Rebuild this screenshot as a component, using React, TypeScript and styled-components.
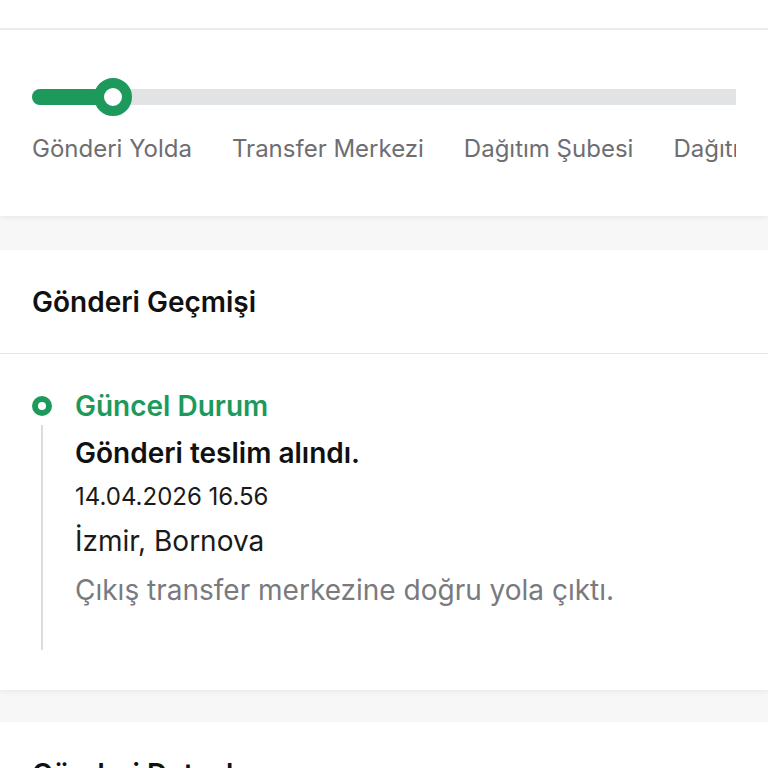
import styled, { createGlobalStyle } from "styled-components";

const GlobalStyle = createGlobalStyle`
  html, body {
    margin: 0;
    padding: 0;
    background: #f7f7f7;
    font-family: Inter, "Noto Sans", sans-serif;
    -webkit-font-smoothing: antialiased;
  }
`;

const Page = styled.div`
  width: 768px;
  height: 768px;
  overflow: hidden;
  background: #f7f7f7;
`;

const TopBar = styled.div`
  height: 28px;
  background: #fff;
  border-bottom: 2px solid #ececec;
`;

const Card = styled.section<{ $gap?: number }>`
  background: #fff;
  margin-top: ${(p) => p.$gap ?? 0}px;
  box-shadow: 0 2px 5px rgba(0, 0, 0, 0.06);
`;

const ProgressBody = styled.div`
  padding: 48px 32px 52px;
`;

const Scroller = styled.div`
  overflow: hidden;
`;

const Track = styled.div`
  position: relative;
  width: 1100px;
  height: 38px;
  display: flex;
  align-items: center;
`;

const Rail = styled.div`
  flex: 1;
  height: 16px;
  border-radius: 8px;
  background: #e2e3e5;
`;

const Fill = styled.div`
  position: absolute;
  left: 0;
  top: 11px;
  width: 90px;
  height: 16px;
  border-radius: 8px;
  background: #1d9a5b;
`;

const Knob = styled.div`
  position: absolute;
  left: 62px;
  top: 0;
  width: 38px;
  height: 38px;
  box-sizing: border-box;
  border-radius: 50%;
  border: 10px solid #1d9a5b;
  background: #fff;
`;

const Steps = styled.div`
  display: flex;
  gap: 40px;
  margin-top: 18px;
  white-space: nowrap;
`;

const Step = styled.span`
  font-size: 24px;
  line-height: 30px;
  color: #6e6e72;
`;

const CardHeader = styled.div`
  height: 103px;
  display: flex;
  align-items: center;
  padding: 0 32px;
  border-bottom: 1px solid #e4e4e4;
  font-size: 28px;
  font-weight: 600;
  color: #111;
`;

const Timeline = styled.div`
  padding: 36px 32px 40px;
`;

const Item = styled.div`
  display: grid;
  grid-template-columns: 20px 1fr;
  column-gap: 23px;
`;

const Rule = styled.div`
  display: flex;
  flex-direction: column;
  align-items: center;
  padding-top: 6px;
`;

const Dot = styled.div`
  width: 20px;
  height: 20px;
  box-sizing: border-box;
  border-radius: 50%;
  border: 6px solid #1d9a5b;
  background: #fff;
`;

const Line = styled.div`
  flex: 1;
  width: 2px;
  margin-top: 9px;
  background: #dcdcdc;
`;

const Content = styled.div`
  display: flex;
  flex-direction: column;
  padding-bottom: 44px;
`;

const Status = styled.div`
  font-size: 28px;
  line-height: 32px;
  font-weight: 600;
  color: #1d9a5b;
`;

const Event = styled.div`
  margin-top: 15px;
  font-size: 28px;
  line-height: 32px;
  font-weight: 600;
  color: #111;
`;

const Stamp = styled.div`
  margin-top: 13px;
  font-size: 24px;
  line-height: 30px;
  color: #1a1a1a;
`;

const Place = styled.div`
  margin-top: 12px;
  font-size: 28px;
  line-height: 34px;
  color: #1a1a1a;
`;

const Note = styled.div`
  margin-top: 16px;
  font-size: 28px;
  line-height: 32px;
  color: #7a7a7e;
`;

const steps = ["Gönderi Yolda", "Transfer Merkezi", "Dağıtım Şubesi", "Dağıtımda", "Teslim Edildi"];

export default function App() {
  return (
    <Page>
      <GlobalStyle />
      <TopBar />
      <Card>
        <ProgressBody>
          <Scroller>
            <Track>
              <Rail />
              <Fill />
              <Knob />
            </Track>
            <Steps>
              {steps.map((s) => (
                <Step key={s}>{s}</Step>
              ))}
            </Steps>
          </Scroller>
        </ProgressBody>
      </Card>
      <Card $gap={34}>
        <CardHeader>Gönderi Geçmişi</CardHeader>
        <Timeline>
          <Item>
            <Rule>
              <Dot />
              <Line />
            </Rule>
            <Content>
              <Status>Güncel Durum</Status>
              <Event>Gönderi teslim alındı.</Event>
              <Stamp>14.04.2026 16.56</Stamp>
              <Place>İzmir, Bornova</Place>
              <Note>Çıkış transfer merkezine doğru yola çıktı.</Note>
            </Content>
          </Item>
        </Timeline>
      </Card>
      <Card $gap={32}>
        <CardHeader>Gönderi Detayları</CardHeader>
      </Card>
    </Page>
  );
}
